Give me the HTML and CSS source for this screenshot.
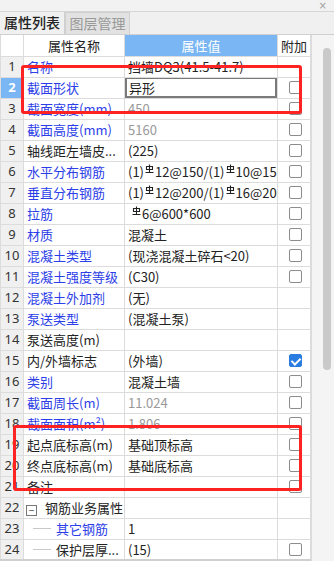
FILE: index.html
```html
<!DOCTYPE html>
<html>
<head>
    <meta charset="UTF-8">
    <title>属性列表</title>
    <link rel="stylesheet" href="styles.css">
</head>
<body>
<div class="panel">
    <div class="titlebar"><span class="close">×</span></div>
    <div class="tabs">
        <div class="tab active">属性列表</div>
        <div class="tab">图层管理</div>
    </div>

    <div class="body">
        <table class="grid">
            <colgroup>
                <col class="c-num"><col class="c-name"><col class="c-val"><col class="c-add">
            </colgroup>
            <tr class="head">
                <th class="num"></th><th>属性名称</th><th class="sel">属性值</th><th>附加</th>
            </tr>
            <tr><td class="num">1</td><td class="link">名称</td><td>挡墙DQ3(41.5-41.7)</td><td></td></tr>
            <tr><td class="num sel">2</td><td class="link">截面形状</td><td class="edit"><span>异形</span></td><td><i class="cb"></i></td></tr>
            <tr><td class="num">3</td><td class="link">截面宽度(mm)</td><td class="dim">450</td><td><i class="cb"></i></td></tr>
            <tr><td class="num">4</td><td class="link">截面高度(mm)</td><td class="dim">5160</td><td><i class="cb"></i></td></tr>
            <tr><td class="num">5</td><td>轴线距左墙皮...</td><td>(225)</td><td><i class="cb"></i></td></tr>
            <tr><td class="num">6</td><td class="link">水平分布钢筋</td><td>(1)<svg class="bar" viewBox="0 0 9 10"><path d="M4.5 0.5V8M1.5 2.5h6v3h-6zM0.5 8.5h8"/></svg>12@150/(1)<svg class="bar" viewBox="0 0 9 10"><path d="M4.5 0.5V8M1.5 2.5h6v3h-6zM0.5 8.5h8"/></svg>10@150</td><td><i class="cb"></i></td></tr>
            <tr><td class="num">7</td><td class="link">垂直分布钢筋</td><td>(1)<svg class="bar" viewBox="0 0 9 10"><path d="M4.5 0.5V8M1.5 2.5h6v3h-6zM0.5 8.5h8"/></svg>12@200/(1)<svg class="bar" viewBox="0 0 9 10"><path d="M4.5 0.5V8M1.5 2.5h6v3h-6zM0.5 8.5h8"/></svg>16@200</td><td><i class="cb"></i></td></tr>
            <tr><td class="num">8</td><td class="link">拉筋</td><td>&nbsp;<svg class="bar" viewBox="0 0 9 10"><path d="M4.5 0.5V8M1.5 2.5h6v3h-6zM0.5 8.5h8"/></svg>6@600*600</td><td><i class="cb"></i></td></tr>
            <tr><td class="num">9</td><td class="link">材质</td><td>混凝土</td><td><i class="cb"></i></td></tr>
            <tr><td class="num">10</td><td class="link">混凝土类型</td><td>(现浇混凝土碎石&lt;20)</td><td><i class="cb"></i></td></tr>
            <tr><td class="num">11</td><td class="link">混凝土强度等级</td><td>(C30)</td><td><i class="cb"></i></td></tr>
            <tr><td class="num">12</td><td class="link">混凝土外加剂</td><td>(无)</td><td></td></tr>
            <tr><td class="num">13</td><td class="link">泵送类型</td><td>(混凝土泵)</td><td></td></tr>
            <tr><td class="num">14</td><td>泵送高度(m)</td><td></td><td></td></tr>
            <tr><td class="num">15</td><td>内/外墙标志</td><td>(外墙)</td><td><i class="cb on"></i></td></tr>
            <tr><td class="num">16</td><td class="link">类别</td><td>混凝土墙</td><td><i class="cb"></i></td></tr>
            <tr><td class="num">17</td><td class="link">截面周长(m)</td><td class="dim">11.024</td><td><i class="cb"></i></td></tr>
            <tr><td class="num">18</td><td class="link">截面面积(m²)</td><td class="dim">1.806</td><td><i class="cb"></i></td></tr>
            <tr><td class="num">19</td><td>起点底标高(m)</td><td>基础顶标高</td><td><i class="cb"></i></td></tr>
            <tr><td class="num">20</td><td>终点底标高(m)</td><td>基础底标高</td><td><i class="cb"></i></td></tr>
            <tr><td class="num">21</td><td>备注</td><td></td><td><i class="cb"></i></td></tr>
            <tr><td class="num">22</td><td class="group"><span class="toggle">−</span>钢筋业务属性</td><td></td><td></td></tr>
            <tr><td class="num">23</td><td class="child link">其它钢筋</td><td>1</td><td></td></tr>
            <tr><td class="num">24</td><td class="child">保护层厚...</td><td>(15)</td><td><i class="cb"></i></td></tr>
        </table>

        <div class="scroll"><div class="thumb"></div></div>
    </div>

    <!-- red markup drawn over the grid -->
    <div class="mark mark1"></div>
    <div class="mark mark2"></div>
</div>
</body>
</html>
```

FILE: styles.css
```css
* { box-sizing: border-box; }

body {
    margin: 0;
    background: #f0f0f0;
    font-family: "Noto Sans CJK SC", "Noto Sans", sans-serif;
    font-size: 13px;
    color: #222;
}

.panel {
    position: relative;
    width: 334px;
    height: 561px;
    overflow: hidden;
    background: #f0f0f0;
}

.titlebar {
    height: 12px;
    border-bottom: 1px solid #d6d6d6;
    background: #f2f2f2;
    display: flex;
    justify-content: flex-end;
}

.close {
    font-family: "DejaVu Sans", sans-serif;
    font-size: 10px;
    line-height: 11px;
    color: #a0a0a0;
    padding-right: 7px;
}

.tabs {
    display: flex;
    height: 23px;
    border-bottom: 1px solid #d0d0d0;
}

.tab {
    width: 65px;
    line-height: 21px;
    text-align: center;
    font-size: 14px;
    color: #999;
    background: #e2e2e2;
    border: 1px solid #d0d0d0;
    border-bottom: none;
}

.tab.active {
    width: 65px;
    color: #222;
    font-weight: 500;
    background: #f0f0f0;
    border: none;
    border-right: 1px solid #d0d0d0;
}

.body {
    display: flex;
    background: #fff;
}

.grid {
    width: 310px;
    border-collapse: collapse;
    table-layout: fixed;
    background: #fff;
}

.c-num { width: 23px; }
.c-name { width: 101px; }
.c-val { width: 153px; }
.c-add { width: 33px; }

.grid td, .grid th {
    height: 21px;
    padding: 0 0 0 3px;
    border: 1px solid #dcdcdc;
    border-top: none;
    line-height: 19px;
    white-space: nowrap;
    overflow: hidden;
    font-weight: normal;
    text-align: left;
}

.grid tr:last-child td { border-bottom: 2px solid #d0d0d0; }

.grid .head th { text-align: center; padding: 0; }
.grid .head th.sel { background: #79b6f3; color: #fff; }
.grid .head th.num { background: #fff; }

.grid td.num {
    padding: 0;
    text-align: center;
    background: #f0f0f0;
    color: #333;
    font-family: "Noto Sans", sans-serif;
    font-size: 13px;
}

.grid td.num.sel { background: #79b6f3; color: #fff; font-weight: bold; }

.link { color: #2c3ee8; }
.dim { color: #999; }

.grid td.edit { padding: 0; }
.edit span {
    display: block;
    height: 21px;
    margin-top: -1px;
    padding-left: 2px;
    line-height: 17px;
    border: 2px solid #7a7a7a;
}

.bar {
    width: 9px;
    height: 10px;
    vertical-align: 3px;
    margin: 0 1px;
}
.bar path { stroke: #222; stroke-width: 1.1; fill: none; }

.cb {
    display: block;
    width: 13px;
    height: 13px;
    margin-left: 8px;
    border: 1px solid #8c8c8c;
    border-radius: 2px;
    background: #fff;
}

.cb.on {
    position: relative;
    background: #2b7ce0;
    border-color: #2b7ce0;
}

.cb.on::after {
    content: "";
    position: absolute;
    left: 3px;
    top: 1px;
    width: 4px;
    height: 7px;
    border: solid #fff;
    border-width: 0 2px 2px 0;
    transform: rotate(45deg);
}

.toggle {
    display: inline-block;
    width: 11px;
    height: 11px;
    margin-right: 8px;
    border: 1px solid #777;
    line-height: 8px;
    text-align: center;
    font-size: 10px;
    color: #444;
    vertical-align: -1px;
}

.grid td.group { padding-left: 2px; }

.grid td.child {
    padding-left: 9px;
}

.child::before {
    content: "";
    display: inline-block;
    width: 18px;
    margin-right: 5px;
    border-top: 1px solid #c8c8c8;
    vertical-align: 5px;
}

.scroll {
    flex: 1;
    background: #f4f4f4;
    border-left: 1px solid #dcdcdc;
    padding: 13px 0 0 11px;
}

.thumb {
    width: 8px;
    height: 322px;
    border-radius: 4px;
    background: #c9c9c9;
}

.mark {
    position: absolute;
    border: 3px solid #ff2222;
    border-radius: 3px;
}

.mark1 { left: 21px; top: 65px; width: 281px; height: 49px; }
.mark2 { left: 13px; top: 425px; width: 289px; height: 66px; }
```
